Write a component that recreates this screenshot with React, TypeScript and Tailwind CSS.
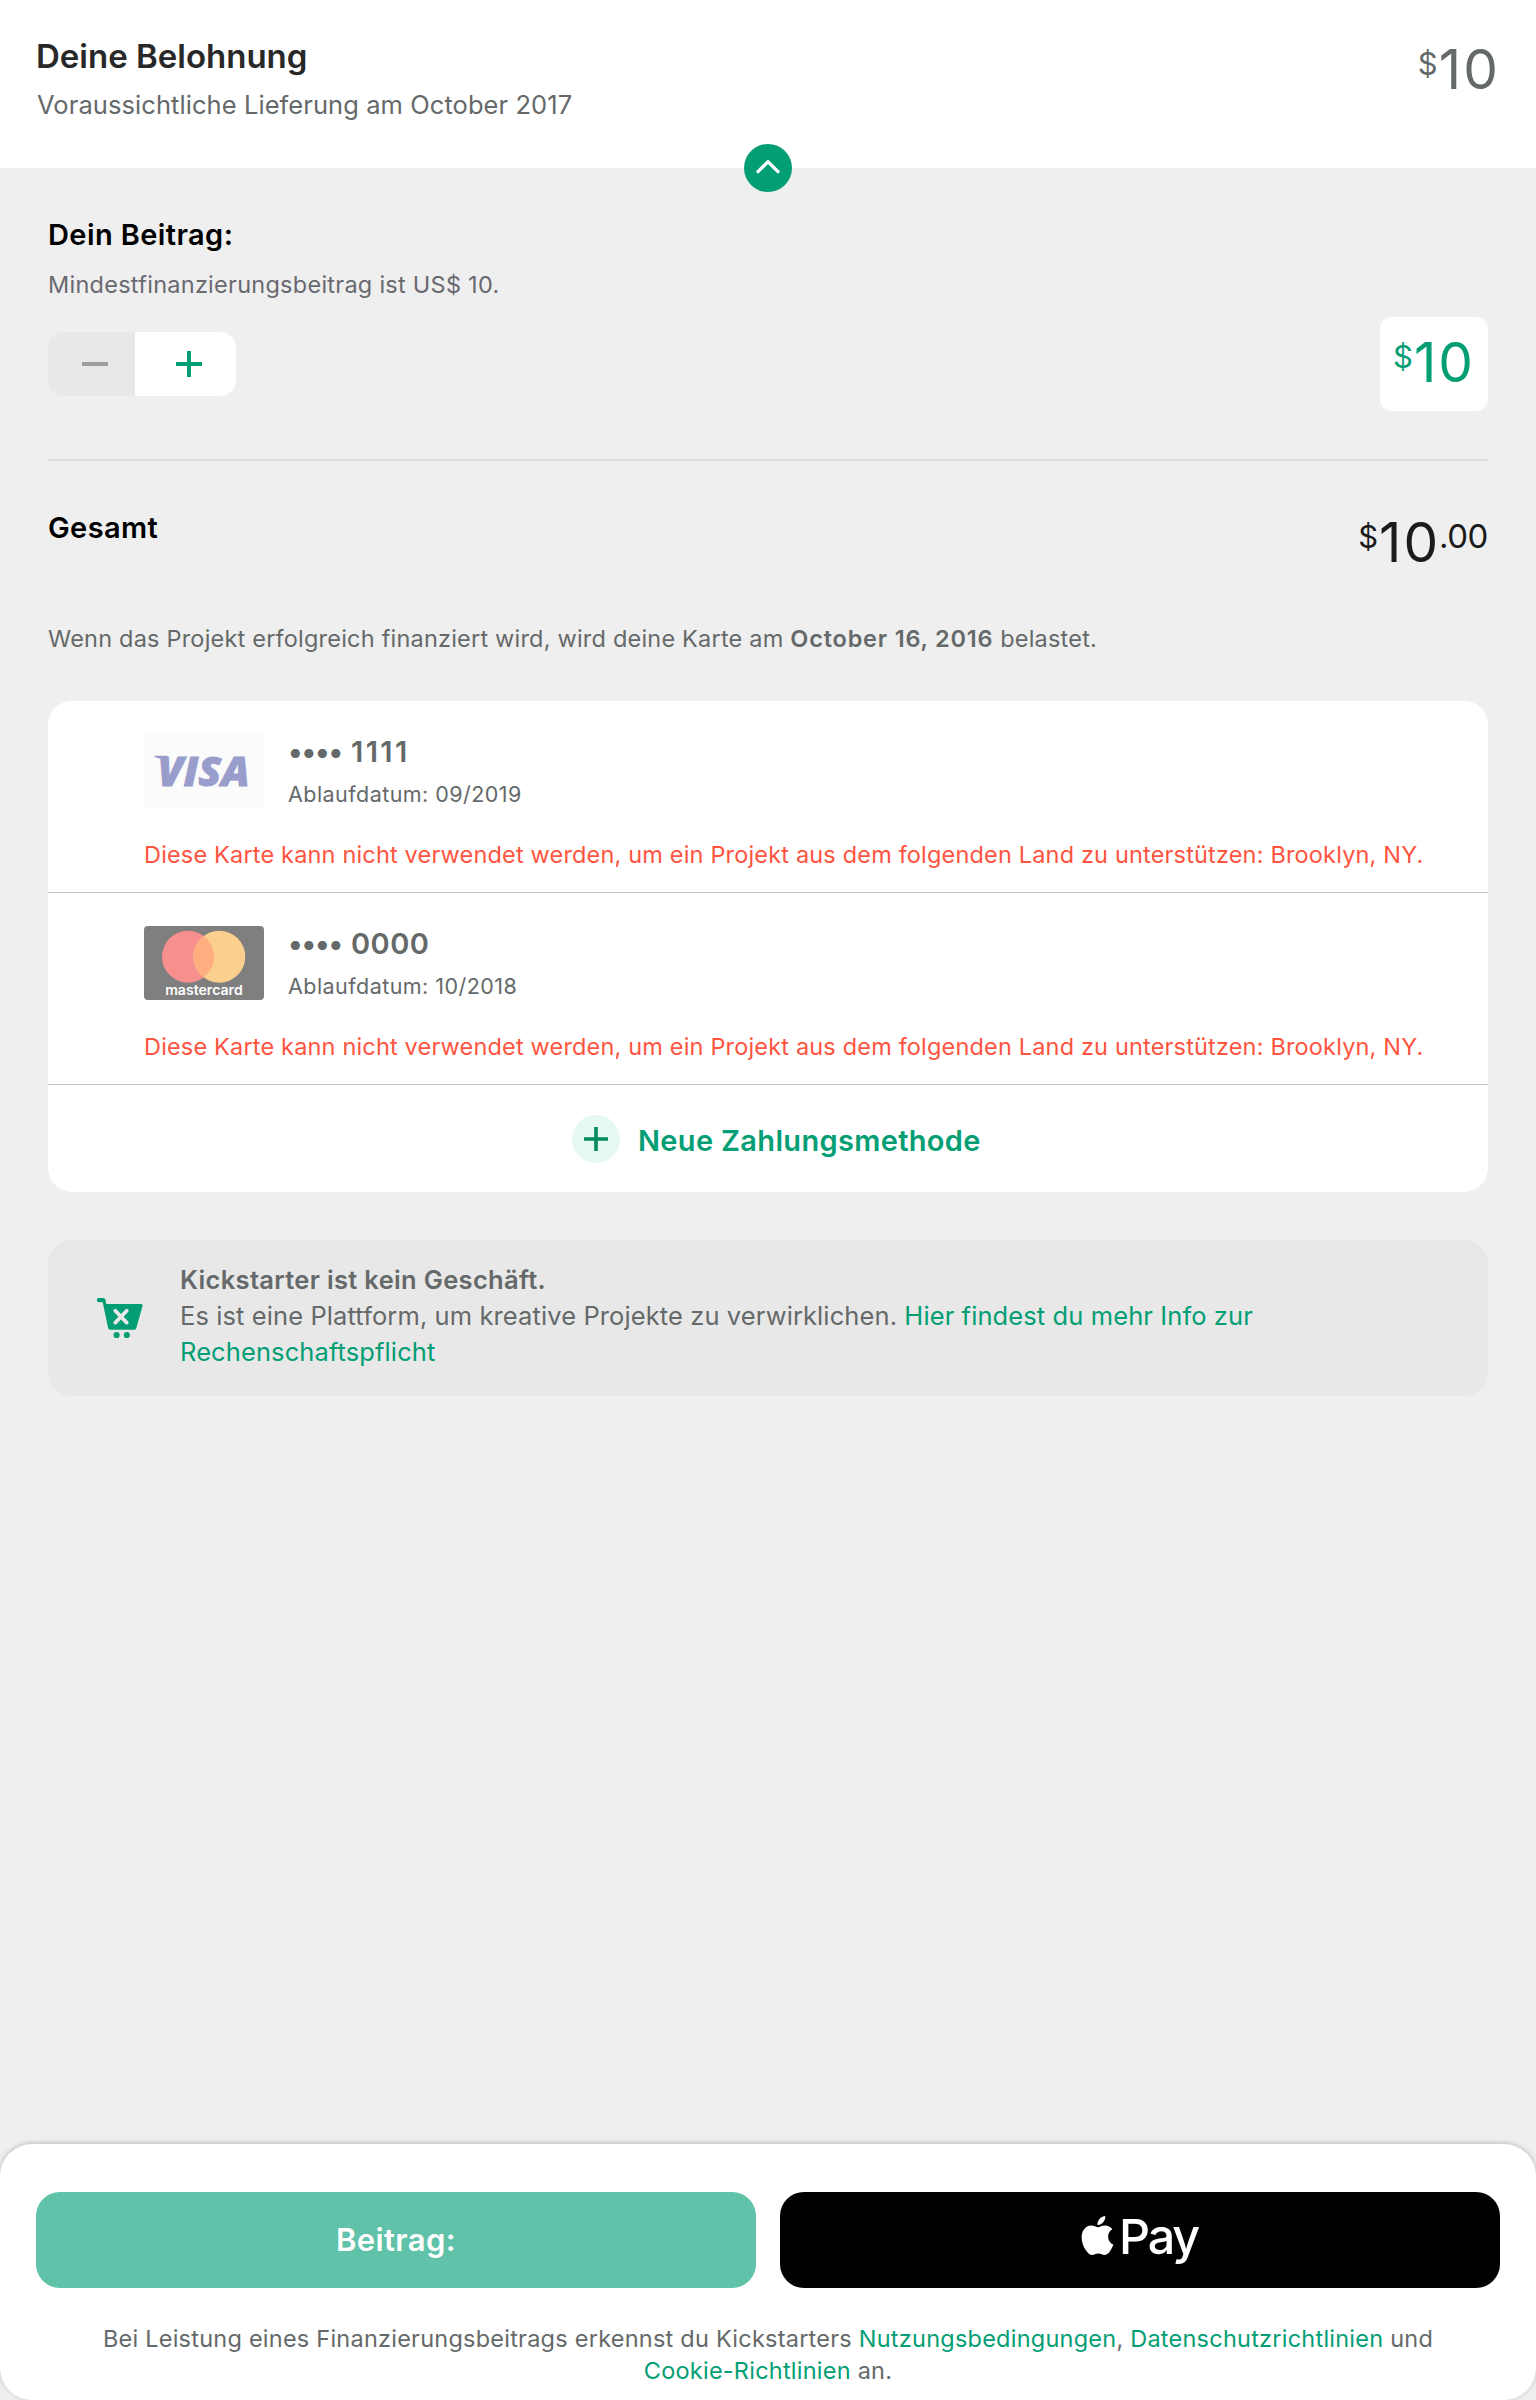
import { SiApple } from "react-icons/si";

function Price({ cents, className }: { cents?: string; className: string }) {
  return (
    <div className={`flex items-start ${className}`}>
      <span className="-ml-px text-[31px] leading-[50px] tracking-[1px]">$</span>
      <span className="text-[55px] leading-[60px] tracking-[2.1px]">10</span>
      {cents && <span className="-ml-[1.5px] text-[33px] leading-[48px] tracking-[-0.4px]">{cents}</span>}
    </div>
  );
}

function VisaLogo() {
  return (
    <svg viewBox="0 0 120 74" className="h-[74px] w-[120px]">
      <rect width="120" height="74" rx="4" fill="#fbfbfb" />
      <text
        x="13.5"
        y="51.6"
        fill="#989dcc"
        stroke="#989dcc"
        strokeWidth="0.8"
        fontFamily="Open Sans"
        fontSize="41.5"
        fontWeight="800"
        fontStyle="italic"
        textLength="92"
        lengthAdjust="spacingAndGlyphs"
      >
        VISA
      </text>
      <path d="M10.5 21.8 H23 L24.5 31 C20 26 15.5 24.2 10.5 23 Z" fill="#989dcc" />
    </svg>
  );
}

function MastercardLogo() {
  return (
    <svg viewBox="0 0 120 74" className="h-[74px] w-[120px]">
      <rect width="120" height="74" rx="4" fill="#7f7f7f" />
      <circle cx="44" cy="30.7" r="26" fill="#f68f8d" />
      <circle cx="75.3" cy="30.7" r="26" fill="#fbcf8d" />
      <path d="M59.65 9.9 A26 26 0 0 1 59.65 51.5 A26 26 0 0 1 59.65 9.9 Z" fill="#ffae7f" />
      <text
        x="21.2"
        y="68.8"
        fill="#fff"
        fontFamily="Inter"
        fontSize="13.5"
        fontWeight="600"
        textLength="77.5"
        lengthAdjust="spacingAndGlyphs"
      >
        mastercard
      </text>
    </svg>
  );
}

const cards = [
  { logo: <VisaLogo />, digits: "1111", tracking: "tracking-[2.4px]", expiry: "09/2019" },
  { logo: <MastercardLogo />, digits: "0000", tracking: "tracking-[0.44px]", expiry: "10/2018" },
];

export default function App() {
  return (
    <div className="flex h-[2400px] w-[1536px] flex-col bg-[#efefef] font-['Inter',sans-serif] text-[#656969]">
      <header className="relative flex h-[168px] items-start justify-between bg-white px-9 pt-9">
        <div>
          <h1 className="text-[33px] leading-[40px] font-semibold text-[#282828]">Deine Belohnung</h1>
          <p className="mt-[13px] pl-px text-[25.5px] leading-[32px] tracking-[0.07px]">
            Voraussichtliche Lieferung am October 2017
          </p>
        </div>
        <Price className="mt-[3px]" />
        <button className="absolute -bottom-6 left-[744px] flex size-12 items-center justify-center rounded-full bg-[#039e74]">
          <svg viewBox="0 0 48 48" className="size-12" fill="none" stroke="#fff" strokeWidth="3.4" strokeLinecap="round">
            <path d="M14 27.6 L24 17.8 L34 27.6" strokeLinejoin="miter" />
          </svg>
        </button>
      </header>

      <main className="px-12 pt-[49px]">
        <h2 className="text-[29px] leading-[36px] font-semibold tracking-[0.4px] text-black">Dein Beitrag:</h2>
        <p className="mt-4 text-[23.5px] leading-[32px] tracking-[0.26px] text-[#696970]">
          Mindestfinanzierungsbeitrag ist US$ 10.
        </p>
        <div className="mt-4 flex items-center justify-between">
          <div className="flex h-16 w-[188px] overflow-hidden rounded-2xl">
            <button className="flex w-[87px] items-center bg-[#e8e8e8] pl-[34px]">
              <span className="h-1 w-[26px] bg-[#9b9e9e]" />
            </button>
            <button className="flex flex-1 items-center bg-white pl-[41px]">
              <svg viewBox="0 0 26 26" className="size-[26px]" stroke="#039e74" strokeWidth="4">
                <path d="M0 13 H26 M13 0 V26" />
              </svg>
            </button>
          </div>
          <div className="h-[94px] w-[108px] rounded-xl bg-white pt-[15px] pl-[14px]">
            <Price className="text-[#039e74]" />
          </div>
        </div>
        <hr className="mt-12 border-t-2 border-[#dcdcdc]" />

        <div className="mt-[49px] flex h-[62px] items-start justify-between">
          <h2 className="text-[29px] leading-[36px] font-semibold tracking-[0.39px] text-black">Gesamt</h2>
          <Price cents=".00" className="mt-[2px] text-[#1b1b1b]" />
        </div>

        <p className="mt-[51px] text-[23.5px] leading-[32px] tracking-[0.205px]">
          Wenn das Projekt erfolgreich finanziert wird, wird deine Karte am{" "}
          <b className="font-semibold tracking-[0.8px]">October 16, 2016</b> belastet.
        </p>

        <section className="mt-[46px] rounded-3xl bg-white">
          {cards.map((card) => (
            <div key={card.digits} className="border-b border-[#c4c6c6] pt-[33px] pb-[21px] pl-24">
              <div className="flex h-[74px] gap-6">
                {card.logo}
                <div>
                  <div className="flex gap-[9px] text-[29px] leading-[36px] font-semibold">
                    <span className="tracking-[-1.1px]">••••</span>
                    <span className={card.tracking}>{card.digits}</span>
                  </div>
                  <p className="mt-[10px] text-[21.5px] leading-[28px] tracking-[0.45px]">
                    Ablaufdatum: {card.expiry}
                  </p>
                </div>
              </div>
              <p className="mt-[31px] text-[23.5px] leading-[32px] tracking-[0.17px] whitespace-nowrap text-[#ff5440]">
                Diese Karte kann nicht verwendet werden, um ein Projekt aus dem folgenden Land zu unterstützen: Brooklyn,
                NY.
              </p>
            </div>
          ))}
          <button className="flex h-[107px] w-full items-start gap-[18px] pt-[30px] pl-[524px]">
            <svg viewBox="0 0 48 48" className="size-12">
              <circle cx="24" cy="24" r="24" fill="#e5f9f1" />
              <path d="M12 24 H36 M24 12 V36" stroke="#038a60" strokeWidth="3.6" />
            </svg>
            <span className="mt-[8px] text-[29px] leading-[36px] font-semibold tracking-[0.335px] text-[#039e74]">
              Neue Zahlungsmethode
            </span>
          </button>
        </section>

        <section className="mt-12 flex h-[156px] rounded-3xl bg-[#e8e8e8] pr-8 pl-12">
          <svg viewBox="0 0 48 48" className="mt-[54px] size-12 shrink-0">
            <path
              d="M2.9 4 H7.3 Q9 4 9.4 5.6 L10.2 10 H44.8 Q47.2 10 46.5 12.3 L40.3 33.9 Q39.8 35.8 37.9 35.8 H14.2 Q12.5 35.8 12.1 34 L6.7 8.2 H2.9 A2.1 2.1 0 0 1 2.9 4 Z"
              fill="#039e74"
            />
            <path d="M19.3 16.8 L30.7 28.6 M30.7 16.8 L19.3 28.6" stroke="#e8e8e8" strokeWidth="3.8" strokeLinecap="round" />
            <circle cx="20.6" cy="41" r="3.1" fill="#039e74" />
            <circle cx="30.8" cy="41" r="3.1" fill="#039e74" />
          </svg>
          <p className="mt-[22px] ml-9 text-[25.5px] leading-[36px] tracking-[0.1px]">
            <b className="font-semibold tracking-[0.33px]">Kickstarter ist kein Geschäft.</b>
            <br />
            Es ist eine Plattform, um kreative Projekte zu verwirklichen.{" "}
            <a className="text-[#039e74]">Hier findest du mehr Info zur Rechenschaftspflicht</a>
          </p>
        </section>
      </main>

      <footer className="mt-auto h-[256px] rounded-[32px] bg-white px-9 pt-12 shadow-[0_-1px_5px_rgba(0,0,0,0.22)]">
        <div className="grid grid-cols-2 gap-6">
          <button className="flex h-24 items-start justify-center rounded-3xl bg-[#5fc2a9] pt-[30px] text-[31px] leading-[36px] font-semibold tracking-[0.4px] text-white">
            Beitrag:
          </button>
          <button className="flex h-24 items-start rounded-3xl bg-black pt-[15px] pl-[298px] text-white">
            <SiApple className="mt-[9px] size-[39px]" />
            <span className="ml-[2px] text-[48.5px] leading-[60px] font-[450] tracking-[-2.2px]">Pay</span>
          </button>
        </div>
        <p className="mt-[35px] text-center text-[23.5px] leading-[32px] tracking-[0.235px]">
          Bei Leistung eines Finanzierungsbeitrags erkennst du Kickstarters{" "}
          <a className="text-[#039e74]">Nutzungsbedingungen</a>, <a className="text-[#039e74]">Datenschutzrichtlinien</a>{" "}
          und <a className="whitespace-nowrap text-[#039e74]">Cookie-Richtlinien</a> an.
        </p>
      </footer>
    </div>
  );
}
